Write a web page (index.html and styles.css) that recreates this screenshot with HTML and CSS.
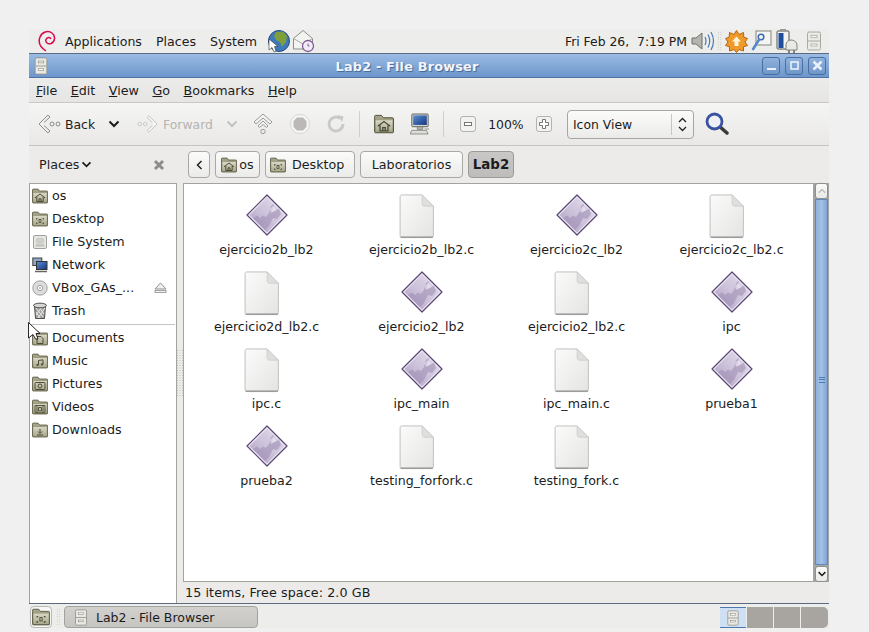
FILE: index.html
```html
<!DOCTYPE html>
<html lang="en">
<head>
<meta charset="utf-8">
<title>Lab2 - File Browser</title>
<link rel="stylesheet" href="styles.css">
</head>
<body>
<svg class="defs" width="0" height="0" aria-hidden="true">
  <defs>
    <linearGradient id="gFolder" x1="0" y1="0" x2="0" y2="1"><stop offset="0" stop-color="#a9a88c"/><stop offset="1" stop-color="#85846a"/></linearGradient>
    <linearGradient id="gFolderB" x1="0" y1="0" x2="0" y2="1"><stop offset="0" stop-color="#d8d7c4"/><stop offset="1" stop-color="#a9a88e"/></linearGradient>
    <linearGradient id="gPage" x1="0" y1="0" x2="1" y2="1"><stop offset="0" stop-color="#fbfbfb"/><stop offset="1" stop-color="#e4e4e2"/></linearGradient>
    <linearGradient id="gExe" x1="1" y1="0" x2="0" y2="1"><stop offset="0" stop-color="#e6e0ed"/><stop offset=".55" stop-color="#cbc0d9"/><stop offset="1" stop-color="#ab9cc1"/></linearGradient>
    <linearGradient id="gBlue" x1="0" y1="0" x2="1" y2="1"><stop offset="0" stop-color="#5b8fd8"/><stop offset="1" stop-color="#14357e"/></linearGradient>
    <symbol id="folder" viewBox="0 0 16 16">
      <path d="M.5 3V1.800C.5 1.400 .8 1.100 1.200 1.100H6L7.500 3H14.800C15.300 3 15.600 3.300 15.600 3.800V14.200C15.600 14.700 15.300 15 14.800 15H1.300C.8 15 .5 14.700 .5 14.200Z" fill="url(#gFolder)" stroke="#55543d" stroke-width=".8"/>
      <path d="M1.300 5H14.800V14.200H1.300Z" fill="url(#gFolderB)"/>
    </symbol>
    <symbol id="i-home" viewBox="0 0 16 16"><use href="#folder"/><path d="M3 9.800L8 6L13 9.800M4.800 9V13.500H11.200V9M7 13.500V10.800H9V13.500" fill="none" stroke="#4d4c36" stroke-width="1"/></symbol>
    <symbol id="i-desk" viewBox="0 0 16 16"><use href="#folder"/><path d="M5.500 7.500H4.500V8.500M10.500 7.500H11.500V8.500M5.500 12.500H4.500V11.500M10.500 12.500H11.500V11.500" fill="none" stroke="#4d4c36"/><rect x="7" y="8.500" width="2" height="3" fill="none" stroke="#4d4c36" stroke-width=".8"/></symbol>
    <symbol id="i-docs" viewBox="0 0 16 16"><use href="#folder"/><path d="M5 13.500V6.500H9L11 8.500V13.500Z" fill="none" stroke="#4d4c36"/></symbol>
    <symbol id="i-music" viewBox="0 0 16 16"><use href="#folder"/><path d="M6.500 12V7.500L11 6.800V11.300" fill="none" stroke="#4d4c36"/><circle cx="5.500" cy="12" r="1.100" fill="#4d4c36"/><circle cx="10" cy="11.400" r="1.100" fill="#4d4c36"/></symbol>
    <symbol id="i-pics" viewBox="0 0 16 16"><use href="#folder"/><rect x="3" y="6.500" width="10" height="7" rx=".8" fill="none" stroke="#4d4c36"/><circle cx="8" cy="10" r="2" fill="none" stroke="#4d4c36"/></symbol>
    <symbol id="i-vid" viewBox="0 0 16 16"><use href="#folder"/><path d="M3 6.500H13V13.800H3ZM5 6.500V13.800M11 6.500V13.800M6.500 8.500H9.500V11.800H6.500Z" fill="none" stroke="#4d4c36" stroke-width=".9"/></symbol>
    <symbol id="i-down" viewBox="0 0 16 16"><use href="#folder"/><path d="M8 7V11M6 9.500L8 11.500L10 9.500M5 13H11" fill="none" stroke="#4d4c36"/></symbol>
    <symbol id="i-cab" viewBox="0 0 16 20">
      <rect x="1.500" y="1" width="13" height="18" rx="1.500" fill="#e9e9e4" stroke="#94948a"/>
      <path d="M2 10H14" stroke="#94948a"/><rect x="5" y="4.500" width="6" height="2" fill="#fff" stroke="#8b8b82" stroke-width=".7"/><rect x="5" y="13" width="6" height="2" fill="#fff" stroke="#8b8b82" stroke-width=".7"/>
    </symbol>
    <symbol id="i-comp" viewBox="0 0 22 24">
      <rect x="2" y="1" width="18" height="14" rx="1" fill="#d8d8d4" stroke="#55554f"/>
      <rect x="3.500" y="2.500" width="15" height="10.500" fill="url(#gBlue)"/>
      <path d="M8 15H14V18H8Z" fill="#b3b3ad" stroke="#66665f" stroke-width=".6"/>
      <path d="M2 19H18L20 23H0Z" fill="#dcdcd8" stroke="#77776f" stroke-width=".8"/><path d="M16 17.500H21" stroke="#aaa" stroke-width="1.500"/>
    </symbol>
    <symbol id="i-net" viewBox="0 0 16 16">
      <rect x=".8" y="1" width="9" height="7.500" fill="#8fa8c8" stroke="#44443f"/>
      <rect x="4.500" y="4.500" width="10.500" height="8" fill="url(#gBlue)" stroke="#33332f"/>
      <path d="M3 14.500H15" stroke="#666" stroke-width="1.500"/>
    </symbol>
    <symbol id="i-fs" viewBox="0 0 16 16">
      <rect x="1.500" y="1.500" width="13" height="13" rx="1.500" fill="#e8e8e6" stroke="#a0a09c"/>
      <ellipse cx="8" cy="7" rx="4.500" ry="3.500" fill="#cfcfcb"/><rect x="3.500" y="10.500" width="9" height="2" fill="#bdbdb9"/>
    </symbol>
    <symbol id="i-disc" viewBox="0 0 16 16">
      <circle cx="8" cy="8" r="7.200" fill="#dcdcdc" stroke="#8e8e8e" stroke-width=".8"/>
      <circle cx="8" cy="8" r="2.700" fill="#fff" stroke="#8c8c8c" stroke-width=".8"/><circle cx="8" cy="8" r="1" fill="#aaa"/>
    </symbol>
    <symbol id="i-trash" viewBox="0 0 16 18">
      <path d="M2.500 4H13.500L12.500 16.500H3.500Z" fill="#a2a29e" stroke="#4e4e4a"/>
      <path d="M4 6L11 15M7 5L12 12M10 5L4 13M13 6L6 16M4 10L8 16" stroke="#e8e8e8" stroke-width="1"/>
      <ellipse cx="8" cy="3.500" rx="6.500" ry="2.300" fill="#d6d6d2" stroke="#4e4e4a"/>
    </symbol>
    <symbol id="i-exe" viewBox="0 0 42 42">
      <path d="M21 1L41 21L21 41L1 21Z" fill="#ece8f1" stroke="#5a4676" stroke-width="1.200" stroke-linejoin="round"/>
      <path d="M21 3.500L38.500 21L21 38.500L3.500 21Z" fill="url(#gExe)"/>
      <path d="M7 24L11 21.500L14 24L17 21.500L20 23L23 19L25 12L28 9.500L26 18L29 17L33 14.500L35 20L31 25L27 24L23 32L19 36Z" fill="#9a8ab0" opacity=".55"/>
      <path d="M24 15L27 12L30 16L25 19Z" fill="#efeaf3" opacity=".6"/>
    </symbol>
    <symbol id="i-page" viewBox="0 0 38 48">
      <path d="M1.500 3C1.500 1.900 2.400 1 3.500 1H25L37 13V44.500C37 45.600 36.100 46.500 35 46.500H3.500C2.400 46.500 1.500 45.600 1.500 44.500Z" fill="url(#gPage)" stroke="#bdbdbb"/>
      <path d="M25 1V10C25 12 26 13 28 13H37Z" fill="#dfdfdd" stroke="#c6c6c4" stroke-width=".7"/>
      <path d="M2 46H36.500" stroke="#8e8e8c" stroke-width="1.300"/>
    </symbol>
    <symbol id="i-chev" viewBox="0 0 12 8"><path d="M1.500 1.500L6 6L10.500 1.500" fill="none" stroke="currentColor" stroke-width="2"/></symbol>
  </defs>
</svg>

<div class="window">
  <header class="panel">
    <svg class="p-logo" width="20" height="24" viewBox="0 0 20 24"><path d="M9 22C3 18 1 13 3 8C5 3 11 1 15 4C19 7 18 13 14 14.500C11 15.500 8 13.500 9 10.500C10 8 13 8 14 10" fill="none" stroke="#d70751" stroke-width="1.500"/></svg>
    <span class="p-item">Applications</span>
    <span class="p-item">Places</span>
    <span class="p-item">System</span>
    <svg class="p-globe" width="24" height="24" viewBox="0 0 24 24"><circle cx="12" cy="12" r="10.500" fill="#3f79bd" stroke="#27477c"/><path d="M9 3L16 2.500L20 7L19 13L15 18L13 13L9 11L7 7Z" fill="#7f9f3b"/><path d="M3 12L9 15V21L4.500 18Z" fill="#5f8b3c"/><path d="M2 10L2 21L5 18.500L7 23L9 22L7.500 17.500L11 17.500Z" fill="#fff" stroke="#333" stroke-width=".6"/></svg>
    <svg class="p-mail" width="23" height="24" viewBox="0 0 23 24"><path d="M1.500 9.500L11 1.500L20.500 9.500V20H1.500Z" fill="#f3f3f0" stroke="#8d8d88"/><path d="M1.500 9.500L11 15L20.500 9.500" fill="none" stroke="#a9a9a4"/><circle cx="16" cy="17" r="5.500" fill="#f3eef6" stroke="#7d5a95" stroke-width="1.300"/><path d="M16 14.500V17H17.500" fill="none" stroke="#7d5a95"/></svg>
    <span class="p-clock">Fri Feb 26,&nbsp; 7:19 PM</span>
    <svg class="p-vol" width="24" height="22" viewBox="0 0 24 22"><path d="M1 8H5L11 3V19L5 14H1Z" fill="#b5b5b0" stroke="#6f6f6a"/><path d="M14 7Q16 11 14 15M17 4.500Q20.500 11 17 17.500M20 2Q25 11 20 20" fill="none" stroke="#4878b8" stroke-width="1.200"/></svg>
    <span class="p-grip"></span>
    <svg class="p-burst" width="23" height="23" viewBox="0 0 23 23"><path d="M11.500 .5L14 4.500L18.500 2.500L18.800 7.200L22.500 8.500L20 12L22.500 15.500L18.500 16.800L18.500 21L14 19.500L11.500 22.500L9 19.500L4.500 21L4.500 16.800L.5 15.500L3 12L.5 8.500L4.200 7.200L4.500 2.500L9 4.500Z" fill="#f09a2a" stroke="#b8620f"/><path d="M11.500 6.500L16 11.500H13.500V16H9.500V11.500H7Z" fill="#fff3d8"/></svg>
    <svg class="p-key" width="21" height="22" viewBox="0 0 21 22"><rect x="5" y="1" width="15" height="14" fill="#f4f4f2" stroke="#85857f"/><circle cx="10" cy="7" r="2.800" fill="none" stroke="#3e6cb0" stroke-width="1.500"/><path d="M8.500 9L1.500 20" stroke="#5487c8" stroke-width="2.500"/></svg>
    <svg class="p-batt" width="22" height="26" viewBox="0 0 22 26"><rect x="1" y="3" width="12" height="18" rx="1" fill="#f4f4f2" stroke="#55554f"/><rect x="2.500" y="5" width="5" height="15" fill="#1e4f9c"/><rect x="4" y="1" width="6" height="2" fill="#999"/><path d="M10 22V17C10 14 12 12 15 12C18 12 21 14 21 17V22Z" fill="#e9e9e6" stroke="#85857f"/><path d="M13 22V25M18 22V25" stroke="#85857f" stroke-width="2"/></svg>
    <svg class="p-cab" width="16" height="20"><use href="#i-cab"/></svg>
  </header>

  <div class="titlebar">
    <svg class="t-icon" width="16" height="18"><use href="#i-cab"/></svg>
    <span class="t-title">Lab2 - File Browser</span>
    <div class="t-btns">
      <span class="t-btn"><svg width="17" height="17" viewBox="0 0 17 17"><path d="M4 12H13" stroke="#eaf1fa" stroke-width="2"/></svg></span>
      <span class="t-btn"><svg width="17" height="17" viewBox="0 0 17 17"><rect x="5" y="5" width="7" height="7" fill="none" stroke="#eaf1fa" stroke-width="1.600"/></svg></span>
      <span class="t-btn"><svg width="17" height="17" viewBox="0 0 17 17"><path d="M4.500 4.500L12.500 12.500M12.500 4.500L4.500 12.500" stroke="#eaf1fa" stroke-width="2.500"/></svg></span>
    </div>
  </div>

  <nav class="menubar">
    <span class="m-item"><u>F</u>ile</span>
    <span class="m-item"><u>E</u>dit</span>
    <span class="m-item"><u>V</u>iew</span>
    <span class="m-item"><u>G</u>o</span>
    <span class="m-item"><u>B</u>ookmarks</span>
    <span class="m-item"><u>H</u>elp</span>
  </nav>

  <div class="toolbar">
    <svg class="tb-back" width="23" height="22" viewBox="0 0 23 22"><path d="M10 2L1 11L10 20L12 18L6 12.500M10 2L12 4L6 9.500" fill="#f0f0ee" stroke="#8c8c88"/><circle cx="14" cy="11" r="2" fill="none" stroke="#8c8c88"/><circle cx="20" cy="11" r="2" fill="none" stroke="#8c8c88"/></svg>
    <span class="tb-label">Back</span>
    <svg class="tb-arrow" width="12" height="8"><use href="#i-chev"/></svg>
    <svg class="tb-fwd" width="21" height="22" viewBox="0 0 23 22"><path d="M13 2L22 11L13 20L11 18L17 12.500M13 2L11 4L17 9.500" fill="#f6f6f4" stroke="#c0c0bd"/><circle cx="9" cy="11" r="2" fill="none" stroke="#c8c8c5"/><circle cx="3" cy="11" r="2" fill="none" stroke="#c8c8c5"/></svg>
    <span class="tb-label is-off">Forward</span>
    <svg class="tb-arrow2" width="12" height="8"><use href="#i-chev"/></svg>
    <svg class="tb-up" width="20" height="22" viewBox="0 0 20 22"><path d="M10 1L19 9L17 11L10 5L3 11L1 9Z" fill="#f4f4f2" stroke="#9a9a97"/><path d="M10 8L15 13L13.500 14.500L10 11.500L6.500 14.500L5 13Z" fill="#f4f4f2" stroke="#9a9a97"/><circle cx="10" cy="18.500" r="2.200" fill="none" stroke="#9a9a97"/></svg>
    <svg class="tb-stop" width="20" height="20" viewBox="0 0 20 20"><path d="M6 .8H14L19.200 6V14L14 19.200H6L.8 14V6Z" fill="#f6f6f4" stroke="#d6d6d3"/><path d="M7 3.500H13L16.500 7V13L13 16.500H7L3.500 13V7Z" fill="#bdb8b8"/></svg>
    <svg class="tb-reload" width="20" height="20" viewBox="0 0 20 20"><path d="M17 10A7 7 0 1 1 14 4.300" fill="none" stroke="#c9c9c6" stroke-width="2.800"/><path d="M11.500 1L17.500 2.500L16 8Z" fill="#c9c9c6"/></svg>
    <span class="tb-sep"></span>
    <svg class="tb-home" width="20" height="20"><use href="#i-home"/></svg>
    <svg class="tb-comp" width="20" height="22"><use href="#i-comp"/></svg>
    <span class="tb-sep tb-sep2"></span>
    <span class="z-btn"><svg width="8" height="8" viewBox="0 0 8 8"><rect x=".5" y="2.500" width="7" height="3" fill="#fff" stroke="#777"/></svg></span>
    <span class="z-val">100%</span>
    <span class="z-btn"><svg width="10" height="10" viewBox="0 0 10 10"><path d="M3.500 .5H6.500V3.500H9.500V6.500H6.500V9.500H3.500V6.500H.5V3.500H3.500Z" fill="#fff" stroke="#777"/></svg></span>
    <div class="combo">
      <span class="combo-text">Icon View</span>
      <span class="combo-arrows"><svg width="9" height="15" viewBox="0 0 9 15"><path d="M1 5L4.500 1.500L8 5M1 10L4.500 13.500L8 10" fill="none" stroke="#222" stroke-width="1.300"/></svg></span>
    </div>
    <svg class="tb-search" width="24" height="24" viewBox="0 0 24 24"><path d="M14 14L22 21" stroke="#3a3a38" stroke-width="3.500" stroke-linecap="round"/><circle cx="9.500" cy="9.500" r="7.500" fill="#eef1f6" stroke="#3a52a0" stroke-width="2.800"/></svg>
  </div>

  <div class="pathrow">
    <div class="side-head">
      <span class="side-title">Places</span>
      <svg class="side-chev" width="11" height="7"><use href="#i-chev"/></svg>
      <svg class="side-close" width="12" height="12" viewBox="0 0 12 12"><path d="M2 2L10 10M10 2L2 10" stroke="#8d8d88" stroke-width="3"/></svg>
    </div>
    <div class="crumbs">
      <span class="crumb crumb-back"><svg width="7" height="10" viewBox="0 0 7 10"><path d="M5.500 1L1.500 5L5.500 9" fill="none" stroke="#222" stroke-width="1.500"/></svg></span>
      <span class="crumb crumb-os"><svg width="16" height="16"><use href="#i-home"/></svg>os</span>
      <span class="crumb crumb-desk"><svg width="16" height="16"><use href="#i-desk"/></svg>Desktop</span>
      <span class="crumb crumb-lab">Laboratorios</span>
      <span class="crumb crumb-on">Lab2</span>
    </div>
  </div>

  <div class="body">
    <aside class="sidebar">
      <ul class="places">
        <li class="place"><svg width="16" height="16"><use href="#i-home"/></svg>os</li>
        <li class="place"><svg width="16" height="16"><use href="#i-desk"/></svg>Desktop</li>
        <li class="place"><svg width="16" height="16"><use href="#i-fs"/></svg>File System</li>
        <li class="place"><svg width="16" height="16"><use href="#i-net"/></svg>Network</li>
        <li class="place"><svg width="16" height="16"><use href="#i-disc"/></svg>VBox_GAs_...<svg class="eject" width="13" height="11" viewBox="0 0 13 11"><path d="M6.500 1L12 7H1Z" fill="#f0f0ee" stroke="#8f8f8b"/><rect x="1" y="8.500" width="11" height="2" fill="#f0f0ee" stroke="#8f8f8b" stroke-width=".8"/></svg></li>
        <li class="place"><svg width="16" height="18"><use href="#i-trash"/></svg>Trash</li>
        <li class="place-sep"></li>
        <li class="place"><svg width="16" height="16"><use href="#i-docs"/></svg>Documents</li>
        <li class="place"><svg width="16" height="16"><use href="#i-music"/></svg>Music</li>
        <li class="place"><svg width="16" height="16"><use href="#i-pics"/></svg>Pictures</li>
        <li class="place"><svg width="16" height="16"><use href="#i-vid"/></svg>Videos</li>
        <li class="place"><svg width="16" height="16"><use href="#i-down"/></svg>Downloads</li>
      </ul>
    </aside>
    <div class="handle"></div>
    <main class="main">
      <div class="viewport">
        <div class="icons">
          <div class="file"><svg class="ico" width="42" height="42"><use href="#i-exe"/></svg><span>ejercicio2b_lb2</span></div>
          <div class="file"><svg class="ico-page" width="37" height="45"><use href="#i-page"/></svg><span>ejercicio2b_lb2.c</span></div>
          <div class="file"><svg class="ico" width="42" height="42"><use href="#i-exe"/></svg><span>ejercicio2c_lb2</span></div>
          <div class="file"><svg class="ico-page" width="37" height="45"><use href="#i-page"/></svg><span>ejercicio2c_lb2.c</span></div>
          <div class="file"><svg class="ico-page" width="37" height="45"><use href="#i-page"/></svg><span>ejercicio2d_lb2.c</span></div>
          <div class="file"><svg class="ico" width="42" height="42"><use href="#i-exe"/></svg><span>ejercicio2_lb2</span></div>
          <div class="file"><svg class="ico-page" width="37" height="45"><use href="#i-page"/></svg><span>ejercicio2_lb2.c</span></div>
          <div class="file"><svg class="ico" width="42" height="42"><use href="#i-exe"/></svg><span>ipc</span></div>
          <div class="file"><svg class="ico-page" width="37" height="45"><use href="#i-page"/></svg><span>ipc.c</span></div>
          <div class="file"><svg class="ico" width="42" height="42"><use href="#i-exe"/></svg><span>ipc_main</span></div>
          <div class="file"><svg class="ico-page" width="37" height="45"><use href="#i-page"/></svg><span>ipc_main.c</span></div>
          <div class="file"><svg class="ico" width="42" height="42"><use href="#i-exe"/></svg><span>prueba1</span></div>
          <div class="file"><svg class="ico" width="42" height="42"><use href="#i-exe"/></svg><span>prueba2</span></div>
          <div class="file"><svg class="ico-page" width="37" height="45"><use href="#i-page"/></svg><span>testing_forfork.c</span></div>
          <div class="file"><svg class="ico-page" width="37" height="45"><use href="#i-page"/></svg><span>testing_fork.c</span></div>
        </div>
      </div>
      <div class="scrollbar">
        <span class="sb-btn"><svg width="10" height="6"><use href="#i-chev"/></svg></span>
        <span class="sb-thumb"><i></i></span>
        <span class="sb-btn sb-down"><svg width="10" height="6"><use href="#i-chev"/></svg></span>
      </div>
      <div class="status">15 items, Free space: 2.0 GB</div>
    </main>
  </div>

  <footer class="taskbar">
    <span class="show-desk"><svg width="18" height="18"><use href="#i-desk"/></svg></span>
    <span class="task-grip"></span>
    <span class="task"><svg width="14" height="17"><use href="#i-cab"/></svg>Lab2 - File Browser</span>
    <div class="pager">
      <span class="ws ws-on"><svg width="14" height="16"><use href="#i-cab"/></svg></span>
      <span class="ws"></span><span class="ws"></span><span class="ws ws-end"></span>
    </div>
  </footer>

  <svg class="cursor" width="13" height="21" viewBox="0 0 13 21"><path d="M.5 .5L12 11.500H8L10 17H7.500L5 12.500L.5 16Z" fill="#fff" stroke="#111" stroke-width=".9"/></svg>
</div>
</body>
</html>
```
FILE: styles.css
```css
* { box-sizing: border-box; }
html, body { margin: 0; height: 100%; }
body {
  background: #f0f0f0;
  font-family: "DejaVu Sans", sans-serif;
  font-size: 12.7px;
  color: #1c1c1c;
  overflow: hidden;
}
svg { display: block; flex: none; }
.defs { position: absolute; }
.window {
  position: relative;
  width: 800px;
  margin: 29px 0 0 29px;
  display: flex;
  flex-direction: column;
}

/* top panel */
.panel {
  height: 25px;
  display: flex;
  align-items: center;
  background: #ededeb;
  border-bottom: 1px solid #5c6b80;
  white-space: nowrap;
  font-size: 12.6px;
}
.p-logo { margin-left: 8px; margin-right: 8px; }
.p-item { margin-right: 14px; }
.p-globe { margin-left: -4px; }
.p-mail { margin-left: 1px; }
.p-clock { margin-left: auto; margin-right: 4px; font-size: 12.4px; }
.p-grip {
  width: 5px;
  height: 20px;
  margin: 0 3px 0 2px;
  background-image: radial-gradient(#b9b9b6 .7px, transparent .8px);
  background-size: 2.500px 2.500px;
}
.p-burst { margin-right: 3px; }
.p-key { margin-right: 4px; }
.p-batt { margin-right: 8px; }
.p-cab { margin-right: 7px; opacity: .75; }

/* title bar */
.titlebar {
  position: relative;
  height: 24px;
  display: flex;
  align-items: center;
  background: linear-gradient(#9abbe4, #6d96ca);
  border-bottom: 1px solid #4e73a6;
}
.t-icon { margin-left: 4px; }
.t-title {
  flex: 1;
  text-align: center;
  padding-left: 3px;
  padding-top: 1px;
  font-weight: bold;
  font-size: 12.8px;
  letter-spacing: .2px;
  color: #f2f6fb;
  text-shadow: 1px 1px 1px #3f6395;
}
.t-btns { display: flex; gap: 5px; margin-right: 3px; }
.t-btn {
  width: 18px;
  height: 18px;
  border: 1px solid #4a6f9f;
  border-radius: 3px;
  background: linear-gradient(#8fb2de, #6f97ca);
  display: flex;
  align-items: center;
  justify-content: center;
}

/* menu bar */
.menubar {
  height: 25px;
  display: flex;
  align-items: center;
  gap: 13.500px;
  padding-left: 7px;
  background: linear-gradient(#ececea, #e6e5e3);
  border-bottom: 1px solid #c8c8c5;
}
.m-item { white-space: nowrap; }

/* tool bar */
.toolbar {
  height: 43px;
  display: flex;
  align-items: center;
  padding-left: 9px;
  background: linear-gradient(#f5f5f3, #e9e8e6);
  border-bottom: 1px solid #c4c4c1;
  font-size: 12.4px;
}
.tb-back { margin-right: -1px; }
.tb-label { margin-left: 5px; }
.is-off { color: #b4b4b1; }
.tb-arrow { margin-left: 13px; margin-right: 17px; color: #1c1c1c; }
.tb-arrow2 { margin-left: 13px; margin-right: 15px; color: #c2c2bf; }
.tb-up { margin-right: 17px; }
.tb-stop { margin-right: 16px; }
.tb-reload { margin-right: 13px; }
.tb-sep { width: 1px; height: 26px; background: #cfcfcc; margin-right: 14px; }
.tb-home { margin-right: 16px; }
.tb-comp { margin-right: 13px; }
.tb-sep2 { margin-right: 16px; }
.z-btn {
  width: 16px;
  height: 16px;
  border: 1px solid #b3b3b0;
  border-radius: 3px;
  background: #f2f2f0;
  display: flex;
  align-items: center;
  justify-content: center;
}
.z-val { width: 60px; text-align: center; }
.combo {
  width: 127px;
  height: 29px;
  margin-left: 15px;
  display: flex;
  align-items: center;
  border: 1px solid #a5a5a2;
  border-radius: 4px;
  background: linear-gradient(#fbfbfa, #ebebe9);
}
.combo-text { flex: 1; padding-left: 5px; }
.combo-arrows {
  width: 22px;
  height: 21px;
  border-left: 1px solid #c6c6c3;
  display: flex;
  align-items: center;
  justify-content: center;
}
.tb-search { margin-left: 11px; }

/* path row */
.pathrow {
  height: 37px;
  display: flex;
  align-items: center;
  background: #ecebe9;
}
.side-head { width: 154px; display: flex; align-items: center; padding-left: 10px; }
.side-title { margin-right: 2px; }
.side-close { margin-left: auto; margin-right: 18px; }
.crumbs { display: flex; gap: 5px; margin-left: 5px; }
.crumb {
  height: 27px;
  display: flex;
  align-items: center;
  justify-content: center;
  gap: 3px;
  border: 1px solid #a8a8a5;
  border-radius: 4px;
  background: linear-gradient(#fbfbfa, #ebebe9);
}
.crumb-back { width: 22px; }
.crumb-os { width: 45px; gap: 2px; }
.crumb-desk { width: 90px; gap: 6px; justify-content: flex-start; padding-left: 4px; }
.crumb-lab { width: 103px; }
.crumb-on {
  width: 46px;
  font-size: 13.400px;
  font-weight: bold;
  background: linear-gradient(#c9c8c6, #bdbcba);
  border-color: #9a9a97;
}

/* body */
.body { height: 420px; display: flex; background: #ecebe9; }
.sidebar {
  width: 148px;
  background: #fff;
  border: 1px solid #a3a3a0;
  border-bottom: 0;
}
.places { list-style: none; margin: 0; padding: 0; }
.place {
  height: 23px;
  display: flex;
  align-items: center;
  gap: 4px;
  padding-left: 2px;
  white-space: nowrap;
}
.eject { margin-left: auto; margin-right: 9px; }
.place-sep { height: 1px; margin: 2px 1px 1px 1px; background: #c4c4c1; }
.handle {
  width: 6px;
  background-image: radial-gradient(#bdbdba .6px, transparent .7px);
  background-size: 2.500px 2.500px;
  background-position: center;
  background-repeat: repeat;
  background-clip: content-box;
  padding: 167px 0 206px;
}
.main {
  flex: 1;
  display: grid;
  grid-template-columns: 1fr 14px;
  grid-template-rows: 399px 1fr;
  min-width: 0;
}
.viewport { background: #fff; border: 1px solid #a3a3a0; border-right-width: 2px; }
.icons {
  display: grid;
  grid-template-columns: repeat(4, 155px);
  grid-auto-rows: 77px;
  padding: 5px 0 0 5px;
  font-size: 12.6px;
}
.file {
  display: flex;
  flex-direction: column;
  align-items: center;
  position: relative;
  white-space: nowrap;
}
.ico { margin-top: 5px; }
.ico-page { margin: 5px 10px 0 0; }
.file span { position: absolute; top: 53px; }
.scrollbar {
  display: flex;
  flex-direction: column;
  background: #a9a8a4;
  border-right: 1px solid #a3a3a0;
}
.sb-btn {
  height: 16px;
  border: 1px solid #8f8f8c;
  border-radius: 3px;
  background: linear-gradient(#fbfbfa, #e9e9e7);
  display: flex;
  align-items: center;
  justify-content: center;
  flex: none;
  color: #c0c0bd;
}
.sb-btn svg { transform: rotate(180deg); }
.sb-down { color: #1c1c1c; }
.sb-down svg { transform: none; }
.sb-thumb {
  flex: 1;
  display: flex;
  align-items: center;
  justify-content: center;
  margin-bottom: 1px;
  background: linear-gradient(90deg, #8db0dd, #a5c2e6 50%, #7fa4d6);
  border: 1px solid #5f88bf;
}
.sb-thumb i {
  width: 6px;
  height: 6px;
  margin-bottom: 5px;
  border-top: 1px solid #4f78ae;
  border-bottom: 1px solid #4f78ae;
  background: linear-gradient(#4f78ae, #4f78ae) center / 100% 1px no-repeat;
}
.status { grid-column: 1 / -1; padding: 3px 0 0 2px; white-space: nowrap; letter-spacing: .1px; }

/* bottom panel */
.taskbar {
  height: 25px;
  display: flex;
  align-items: flex-end;
  background: #ededeb;
  border-top: 1px solid #5c6b80;
}
.show-desk {
  width: 22px;
  height: 22px;
  margin-left: 1px;
  border: 1px solid #b8b8b5;
  border-radius: 4px;
  background: #f7f7f5;
  display: flex;
  align-items: center;
  justify-content: center;
}
.task-grip {
  width: 5px;
  height: 18px;
  margin: 0 3px 2px 4px;
  background-image: radial-gradient(#bcbcb9 .7px, transparent .8px);
  background-size: 2.500px 2.500px;
}
.task {
  width: 194px;
  height: 22px;
  display: flex;
  align-items: center;
  gap: 8px;
  padding-left: 9px;
  border: 1px solid #a1a19e;
  border-radius: 4px;
  background: linear-gradient(#d2d1ce, #c6c5c2);
  white-space: nowrap;
  font-size: 12.500px;
}
.pager { margin-left: auto; display: flex; gap: 1px; height: 21px; margin-right: 1px; }
.ws { width: 26px; background: #a8a5a0; }
.ws-on {
  background: #cfe0f4;
  border-top: 1px solid #4f78ae;
  border-bottom: 1px solid #4f78ae;
  display: flex;
  align-items: center;
  justify-content: center;
}
.ws-end { width: 27px; border-radius: 0 5px 5px 0; }

.cursor { position: absolute; left: -1px; top: 293px; }
```
